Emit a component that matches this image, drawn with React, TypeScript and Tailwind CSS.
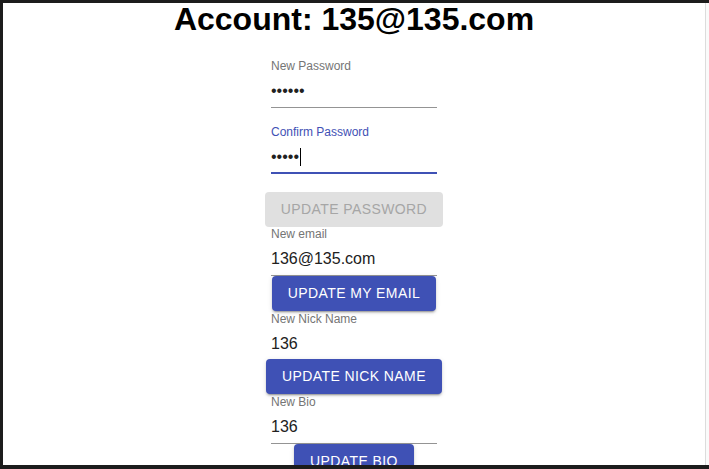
import React from 'react';
import clsx from 'clsx';

type FieldProps = {
	label: string;
	value: string;
	masked?: boolean;
	focused?: boolean;
	className?: string;
};

const Field: React.FC<FieldProps> = ({ label, value, masked, focused, className }) => (
	<div className={clsx('flex w-[166px] shrink-0 flex-col', className)}>
		<label className={clsx('h-[17px] text-[12px] leading-[17px]', focused ? 'text-[#3f51b5]' : 'text-[#757575]')}>
			{label}
		</label>
		<div
			className={clsx(
				'flex h-[33px] items-start pt-[4px] text-[16px] leading-[23px] text-[#212121]',
				focused ? 'border-b-2 border-[#3f51b5]' : 'border-b border-[#949494]'
			)}
		>
			{masked ? (
				<span className="flex items-center">
					<span>{'\u2022'.repeat(value.length)}</span>
					{focused && <span className="ml-px inline-block h-[18px] w-px bg-black" />}
				</span>
			) : (
				<input readOnly value={value} className="w-full bg-transparent p-0 leading-[23px] outline-none" />
			)}
		</div>
	</div>
);

const Button: React.FC<{ children: React.ReactNode; disabled?: boolean; className?: string }> = ({
	children,
	disabled,
	className,
}) => (
	<button
		disabled={disabled}
		className={clsx(
			'relative h-[35px] shrink-0 rounded-[4px] px-4 text-[14px] uppercase tracking-[0.4px]',
			disabled
				? 'bg-[#e0e0e0] text-[#a6a6a6]'
				: 'bg-[#3f51b5] text-white shadow-[0px_3px_1px_-2px_rgba(0,0,0,0.2),0px_2px_2px_0px_rgba(0,0,0,0.14),0px_1px_5px_0px_rgba(0,0,0,0.12)]',
			className
		)}
	>
		{children}
	</button>
);

const App: React.FC = () => {
	return (
		<div className="relative flex h-screen overflow-hidden bg-white font-['Liberation_Sans',Arial,sans-serif]">
			<main className="flex min-w-0 flex-1 flex-col items-center pt-[3px] pl-[3px]">
				<h1 className="shrink-0 text-[32px] font-bold leading-[32px] text-black">Account: 135@135.com</h1>

				{/* password */}
				<Field label="New Password" value="123456" masked className="mt-[23px]" />
				<Field label="Confirm Password" value="12345" masked focused className="mt-[16px]" />
				<Button disabled className="mt-[18px]">
					Update Password
				</Button>

				{/* email */}
				<Field label="New email" value="136@135.com" className="-mt-px" />
				<Button>Update my email</Button>

				{/* nick name */}
				<Field label="New Nick Name" value="136" />
				<Button className="-mt-[2px]">Update Nick Name</Button>

				{/* bio */}
				<Field label="New Bio" value="136" />
				<Button>Update Bio</Button>
			</main>
			<div className="w-[4px] shrink-0 border-l border-[#dcdcdc] bg-[#fafafa]" />

			{/* window frame over the page */}
			<div className="pointer-events-none absolute inset-0 z-20 border-t-[3px] border-b-[4px] border-l-[3px] border-[#1c1c1c]" />
		</div>
	);
};

export default App;
